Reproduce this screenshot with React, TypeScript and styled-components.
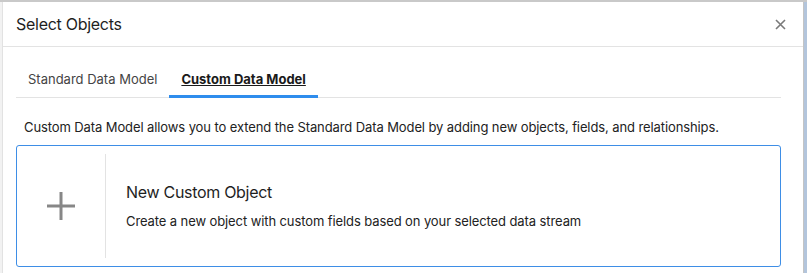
import styled, { createGlobalStyle } from 'styled-components'

const GlobalStyle = createGlobalStyle`
  html, body {
    margin: 0;
    padding: 0;
    background: #ffffff;
  }
  body {
    font-family: Inter, "Liberation Sans", Arial, sans-serif;
    color: #222;
  }
`;

const tabs = ['Standard Data Model', 'Custom Data Model'];

const App = () => {
  return (
    <>
      <GlobalStyle />
      <Page>
        <LeftGutter />
        <Modal>
          <Header>
            <Title>Select Objects</Title>
            <CloseButton aria-label="close">
              <svg width="11" height="11" viewBox="0 0 11 11">
                <path d="M1 1L10 10M10 1L1 10" stroke="#7a7a7a" strokeWidth="1.6" />
              </svg>
            </CloseButton>
          </Header>
          <Body>
            <TabBar>
              {tabs.map((t, i) => (
                <Tab key={t} $active={i === 1}>{t}</Tab>
              ))}
            </TabBar>
            <Description>
              Custom Data Model allows you to extend the Standard Data Model by adding new objects, fields, and relationships.
            </Description>
            <ObjectCard>
              <IconCell>
                <svg width="28" height="28" viewBox="0 0 28 28">
                  <path d="M14 0V28M0 14H28" stroke="#878787" strokeWidth="3" />
                </svg>
              </IconCell>
              <CardText>
                <CardTitle>New Custom Object</CardTitle>
                <CardSub>Create a new object with custom fields based on your selected data stream</CardSub>
              </CardText>
            </ObjectCard>
          </Body>
        </Modal>
        <RightEdge />
      </Page>
    </>
  )
}

const Page = styled.div`
  display: flex;
  width: 807px;
  height: 273px;
  border-top: 2px solid #c9c9c9;
  box-sizing: border-box;
  overflow: hidden;
`;

const LeftGutter = styled.div`
  width: 2px;
  background: #f2f2f2;
  border-right: 1px solid #e2e2e2;
`;

const Modal = styled.div`
  flex: 1;
  display: flex;
  flex-direction: column;
  background: #fff;
`;

const RightEdge = styled.div`
  width: 3px;
  background: #b3c5dc;
  border-left: 1px solid #c4c4c4;
`;

const Header = styled.div`
  display: flex;
  align-items: center;
  justify-content: space-between;
  height: 44px;
  padding: 0 17px 0 13px;
  border-bottom: 1px solid #e3e3e3;
`;

const Title = styled.h1`
  margin: 0;
  font-size: 16px;
  font-weight: 400;
  letter-spacing: -0.28px;
  color: #1f1f1f;
`;

const CloseButton = styled.button`
  display: flex;
  border: none;
  background: none;
  padding: 0;
  cursor: pointer;
`;

const Body = styled.div`
  display: flex;
  flex-direction: column;
  padding: 16px 22px 0 13px;
`;

const TabBar = styled.div`
  display: flex;
  border-bottom: 1px solid #e3e3e3;
`;

const Tab = styled.div<{ $active?: boolean }>`
  padding: 8px 12px 7px;
  margin-bottom: -1px;
  font-size: 13px;
  line-height: 17px;
  color: ${p => (p.$active ? '#1a1a1a' : '#444')};
  font-weight: ${p => (p.$active ? 700 : 400)};
  text-decoration: ${p => (p.$active ? 'underline' : 'none')};
  border-bottom: 3px solid ${p => (p.$active ? '#2f8ded' : 'transparent')};
  cursor: pointer;
`;

const Description = styled.p`
  margin: 0;
  padding: 21px 8px 10px;
  font-size: 13px;
  line-height: 16px;
  letter-spacing: -0.1px;
  color: #222;
`;

const ObjectCard = styled.div`
  display: flex;
  height: 122px;
  box-sizing: border-box;
  border: 1px solid #3e8ee6;
  border-radius: 3px;
  padding: 8px 0;
`;

const IconCell = styled.div`
  display: flex;
  align-items: center;
  justify-content: center;
  width: 88px;
  border-right: 1px solid #e3e3e3;
`;

const CardText = styled.div`
  display: flex;
  flex-direction: column;
  justify-content: center;
  gap: 11px;
  padding: 0 20px;
`;

const CardTitle = styled.div`
  font-size: 16px;
  line-height: 19px;
  letter-spacing: -0.3px;
  color: #1f1f1f;
`;

const CardSub = styled.div`
  font-size: 13px;
  line-height: 16px;
  letter-spacing: -0.1px;
  color: #222;
`;

export default App
